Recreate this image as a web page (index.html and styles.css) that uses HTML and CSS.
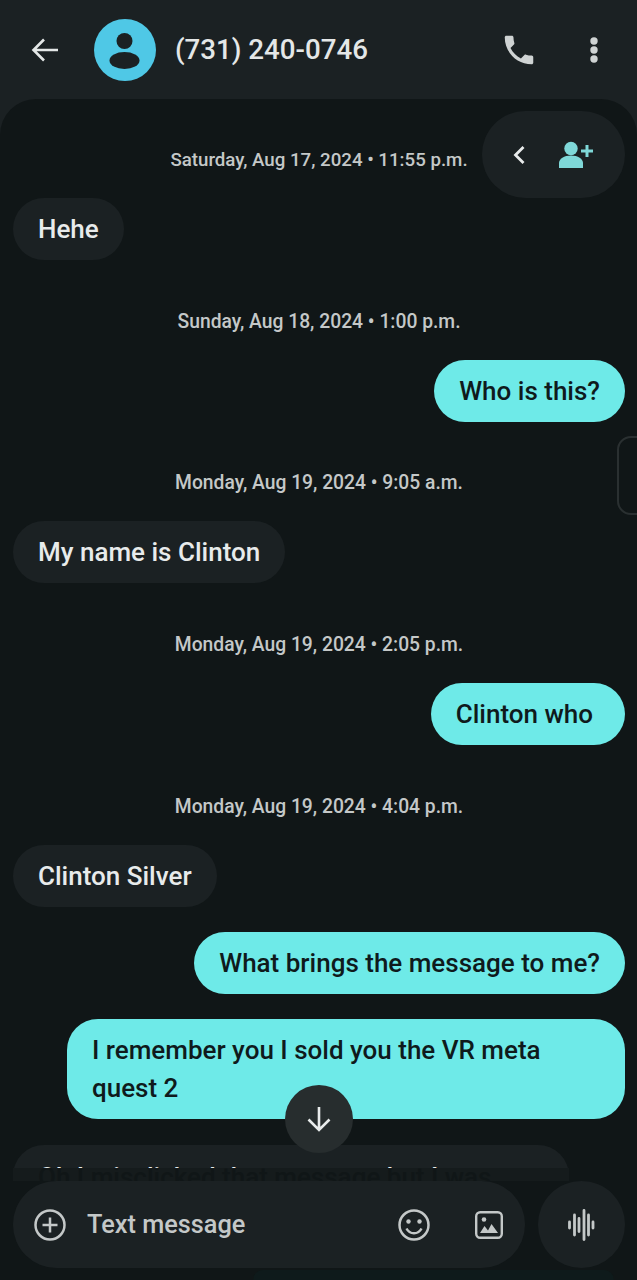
FILE: index.html
```html
<!DOCTYPE html>
<html lang="en">
<head>
<meta charset="utf-8">
<title>Messages</title>
<link rel="stylesheet" href="styles.css">
</head>
<body>
<div class="app">
  <header class="top">
    <svg class="ic-back" viewBox="0 0 28 26"><path d="M27 13H3M13 2.500 2.500 13 13 23.500" fill="none" stroke="#e4e7e7" stroke-width="2.600"/></svg>
    <svg class="avatar" viewBox="0 0 62 62"><circle cx="31" cy="31" r="31" fill="#4fc8e6"/><circle cx="30.500" cy="22" r="8" fill="#1b2123"/><ellipse cx="30.500" cy="41.500" rx="15" ry="8.500" fill="#1b2123"/></svg>
    <h1 class="title">(731) 240-0746</h1>
    <svg class="ic-phone" viewBox="0 0 24 24"><path d="M6.620 10.790c1.440 2.830 3.760 5.140 6.590 6.590l2.200-2.200c.27-.27.67-.36 1.020-.24 1.120.37 2.330.57 3.570.57.550 0 1 .45 1 1V20c0 .55-.45 1-1 1C10.610 21 3 13.390 3 4c0-.55.45-1 1-1h3.500c.55 0 1 .45 1 1 0 1.250.2 2.450.57 3.570.11.350.03.740-.25 1.020z" fill="#cfd3d3"/></svg>
    <svg class="ic-more" viewBox="0 0 8 26"><circle cx="4" cy="4" r="3.700" fill="#cfd3d3"/><circle cx="4" cy="13" r="3.700" fill="#cfd3d3"/><circle cx="4" cy="22" r="3.700" fill="#cfd3d3"/></svg>
  </header>

  <main class="thread">
    <div class="list">
      <p class="date first">Saturday, Aug 17, 2024 • 11:55 p.m.</p>
      <div class="msg in">Hehe</div>
      <p class="date">Sunday, Aug 18, 2024 • 1:00 p.m.</p>
      <div class="msg out">Who is this?</div>
      <p class="date tight">Monday, Aug 19, 2024 • 9:05 a.m.</p>
      <div class="msg in">My name is Clinton</div>
      <p class="date">Monday, Aug 19, 2024 • 2:05 p.m.</p>
      <div class="msg out roomy">Clinton who</div>
      <p class="date">Monday, Aug 19, 2024 • 4:04 p.m.</p>
      <div class="msg in">Clinton Silver</div>
      <div class="msg out near">What brings the message to me?</div>
      <div class="msg out near wide">I remember you I sold you the VR meta quest 2</div>
      <div class="msg in last">Oh I misclicked that message but I was</div>
    </div>
    <div class="ghost"><span class="ghost-text">Oh I misclicked that message but I was</span></div>

    <div class="composer-row">
      <div class="composer">
        <svg class="ic-plus" viewBox="0 0 32 32"><circle cx="16" cy="16" r="14.500" fill="none" stroke="#c4c8c8" stroke-width="2.500"/><path d="M16 8.500v15M8.500 16h15" stroke="#c4c8c8" stroke-width="2.500"/></svg>
        <span class="placeholder">Text message</span>
        <svg class="ic-smile" viewBox="0 0 32 32"><circle cx="16" cy="16" r="14.500" fill="none" stroke="#c4c8c8" stroke-width="2.500"/><circle cx="10.500" cy="12.500" r="2.200" fill="#c4c8c8"/><circle cx="21.500" cy="12.500" r="2.200" fill="#c4c8c8"/><path d="M8.500 19.500c1.600 3.200 4.200 4.800 7.500 4.800s5.900-1.600 7.500-4.800" fill="none" stroke="#c4c8c8" stroke-width="2.400"/></svg>
        <svg class="ic-image" viewBox="0 0 28 28"><rect x="1.200" y="1.200" width="25.600" height="25.600" rx="4" fill="none" stroke="#c4c8c8" stroke-width="2.400"/><circle cx="9" cy="8.500" r="2.300" fill="#c4c8c8"/><path d="M5 22l4.500-7 3.500 4.500 3.500-6.500 6.500 9z" fill="#c4c8c8"/></svg>
      </div>
      <button class="mic" type="button" aria-label="Voice message">
        <svg class="ic-wave" viewBox="0 0 28 32"><path d="M1.500 13v6M6.500 6v20M11 9.500v13M16 1.500v29M20.500 6v20M25 13v6" stroke="#c4c8c8" stroke-width="2.800" stroke-linecap="round" fill="none"/></svg>
      </button>
    </div>
    <div class="under"></div>
  </main>

  <div class="pill">
    <svg class="ic-chev" viewBox="0 0 12 20"><path d="M10.500 2 2.500 10l8 8" fill="none" stroke="#e8ebeb" stroke-width="2.800"/></svg>
    <svg class="ic-add" viewBox="0 0 35 28"><circle cx="13" cy="7.500" r="6.700" fill="#7fd8d8"/><path d="M1 27v-5c0-4 5-7.500 12-7.500s12 3.500 12 7.500v5z" fill="#7fd8d8"/><path d="M29 4v12M23 10h12" stroke="#7fd8d8" stroke-width="3"/></svg>
  </div>
  <div class="handle"></div>
  <button class="down" type="button" aria-label="Scroll to bottom">
    <svg class="ic-down" viewBox="0 0 26 26"><path d="M13 1v23M2.500 13.500 13 24l10.500-10.500" fill="none" stroke="#e8ebeb" stroke-width="2.600"/></svg>
  </button>
</div>
</body>
</html>
```
FILE: styles.css
```css
* { box-sizing: border-box; }
html, body { margin: 0; padding: 0; background: #101617; }
body { font-family: Roboto, "Noto Sans", sans-serif; }

.app {
  position: relative;
  width: 637px;
  height: 1280px;
  overflow: hidden;
  display: flex;
  flex-direction: column;
  background: #1b2123;
}

.top {
  flex: none;
  height: 99px;
  display: flex;
  align-items: center;
}
.ic-back { width: 28px; height: 26px; margin-left: 31px; }
.avatar { width: 62px; height: 62px; margin-left: 35px; }
.title {
  flex: 1;
  margin: 0 0 0 19px;
  font-size: 27.700px;
  font-weight: 500;
  color: #e4e7e7;
}
.ic-phone { width: 38px; height: 38px; margin-right: 52px; }
.ic-more { width: 8px; height: 26px; margin-right: 39px; }

.thread {
  flex: 1;
  min-height: 0;
  display: flex;
  flex-direction: column;
  background: #101617;
  border-radius: 36px 36px 0 0;
}
.list {
  flex: 1;
  min-height: 0;
  overflow: hidden;
  display: flex;
  flex-direction: column;
  align-items: flex-start;
  padding: 0 12px 0 13px;
}
.date {
  flex: none;
  align-self: stretch;
  margin: 51px 0 27px;
  height: 22px;
  line-height: 22px;
  text-align: center;
  font-size: 19.300px;
  font-weight: 500;
  color: #c4c8c8;
}
.date.first { margin-top: 50px; font-size: 18.700px; }
.date.tight { margin-top: 50px; }

.msg {
  flex: none;
  max-width: 558px;
  padding: 12px 25px;
  border-radius: 31px;
  font-size: 26px;
  line-height: 38px;
  font-weight: 500;
}
.in { background: #1b2123; color: #e8ebeb; }
.out { align-self: flex-end; background: #6eeae8; color: #0f1a1c; }
.roomy { padding-right: 32px; }
.near { margin-top: 25px; }
.wide { width: 558px; }
.last { margin-top: 26px; padding-top: 13px; width: 556px; white-space: nowrap; }

.ghost {
  flex: none;
  height: 13px;
  overflow: hidden;
  margin: 0 68px 0 13px;
  padding-left: 25px;
  background: #151b1c;
}
.ghost-text {
  display: block;
  margin-top: -10px;
  font-size: 26px;
  line-height: 38px;
  font-weight: 500;
  color: #101617;
  white-space: nowrap;
}

.composer-row {
  flex: none;
  display: flex;
  gap: 13px;
  padding: 0 12px 0 13px;
}
.composer {
  flex: 1;
  height: 87px;
  display: flex;
  align-items: center;
  border-radius: 44px;
  background: #1b2123;
}
.ic-plus { width: 32px; height: 32px; margin-left: 21px; }
.placeholder {
  flex: 1;
  margin-left: 21px;
  font-size: 25.300px;
  font-weight: 500;
  color: #c4c8c8;
}
.ic-smile { width: 32px; height: 32px; margin-right: 45px; }
.ic-image { width: 28px; height: 28px; margin-right: 22px; }
.mic {
  width: 87px;
  height: 87px;
  padding: 0;
  border: 0;
  border-radius: 50%;
  background: #1b2123;
  display: flex;
  align-items: center;
  justify-content: center;
}
.ic-wave { width: 28px; height: 32px; }
.under {
  flex: none;
  height: 10px;
  margin: 2px 23px 0 253px;
  border-radius: 24px 24px 0 0;
  background: #0e1a1b;
}

.pill {
  position: absolute;
  left: 482px;
  top: 111px;
  width: 143px;
  height: 87px;
  border-radius: 44px;
  background: #1b2123;
  display: flex;
  align-items: center;
}
.ic-chev { width: 12px; height: 20px; margin: 0 0 0 31px; }
.ic-add { width: 35px; height: 28px; margin-left: 33px; }

.handle {
  position: absolute;
  right: -14px;
  top: 436px;
  width: 34px;
  height: 79px;
  border: 2px solid #2a3031;
  border-radius: 14px;
}

.down {
  position: absolute;
  left: 285px;
  top: 1085px;
  width: 68px;
  height: 68px;
  padding: 0;
  border: 0;
  border-radius: 50%;
  background: #272d2e;
  display: flex;
  align-items: center;
  justify-content: center;
}
.ic-down { width: 26px; height: 26px; }
```
